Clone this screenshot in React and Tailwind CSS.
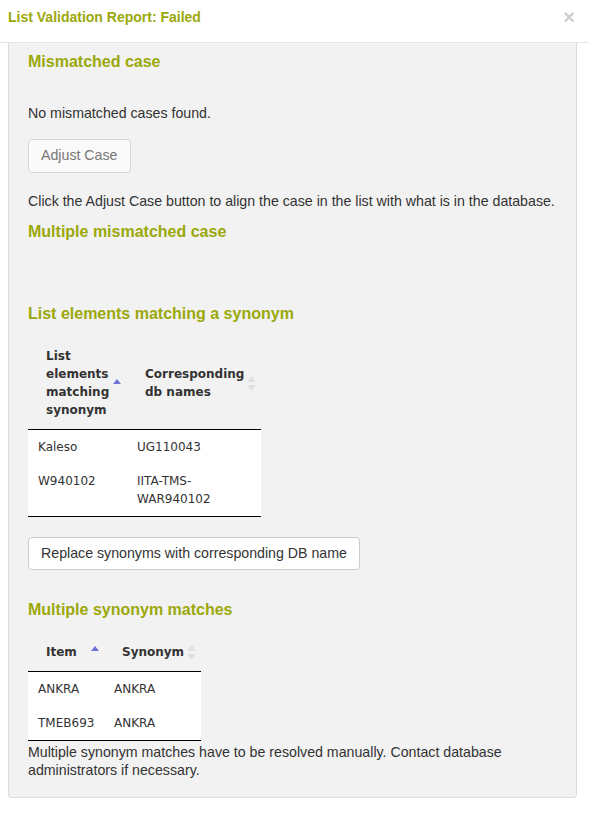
import React from "react";

function SortAsc() {
  return (
    <svg width="8" height="6" viewBox="0 0 8 6" className="absolute right-[6px] top-[42px]">
      <polygon points="4,0 8,5 0,5" fill="#6f73d9" />
    </svg>
  );
}

function SortBoth({ className }) {
  return (
    <svg width="9" height="15" viewBox="0 0 9 15" className={className}>
      <polygon points="4.5,0 9,6 0,6" fill="#e0e0e0" />
      <polygon points="0,9 9,9 4.5,15" fill="#e0e0e0" />
    </svg>
  );
}

export default function App() {
  const heading = "text-[16px] leading-[20px] font-bold text-[#9ba80a]";
  const verdana = { fontFamily: '"DejaVu Sans", Verdana, sans-serif' };
  return (
    <div className="w-[589px] h-[828px] bg-white text-[#333] text-[14.2px]" style={{ fontFamily: '"Liberation Sans", Arial, sans-serif' }}>
      <div className="h-[43px] border-b border-[#e5e5e5] flex items-center justify-between pl-[8px] pr-[14px]">
        <div className="text-[14px] font-bold text-[#9ba80a] leading-[20px] -mt-[8px]">List Validation Report: Failed</div>
        <div className="text-[20px] font-bold text-[#cfcfcf] leading-[20px] -mt-[8px]">×</div>
      </div>
      <div className="mx-[8px] w-[569px] bg-[#f2f2f2] border border-t-0 border-[#dcdcdc] rounded-b-[4px] pl-[19px] pr-[12px] pt-[9px] pb-[18px]">
        <div className={heading}>Mismatched case</div>
        <div className="mt-[32px] leading-[18px]">No mismatched cases found.</div>
        <button className="mt-[17px] h-[34px] px-[12px] border border-[#d6d6d6] rounded-[4px] bg-[#fafafa] text-[#777] text-[14.2px]">Adjust Case</button>
        <div className="mt-[19px] leading-[18px]">Click the Adjust Case button to align the case in the list with what is in the database.</div>
        <div className={heading + " mt-[12px]"}>Multiple mismatched case</div>
        <div className={heading + " mt-[62px]"}>List elements matching a synonym</div>

        <table className="mt-[13px] table-fixed border-collapse text-[12px] w-[233px]" style={verdana}>
          <thead>
            <tr className="border-b border-black">
              <th className="relative w-[99px] pl-[18px] pr-[18px] py-[10px] text-left align-middle font-bold leading-[18px] h-[92px]">
                List elements matching synonym
                <SortAsc />
              </th>
              <th className="relative w-[134px] pl-[18px] pr-[14px] py-[10px] text-left align-middle font-bold leading-[18px]">
                Corresponding db names
                <SortBoth className="absolute right-[5px] top-[39px]" />
              </th>
            </tr>
          </thead>
          <tbody className="bg-white">
            <tr>
              <td className="px-[10px] py-[8px] leading-[18px] align-top">Kaleso</td>
              <td className="px-[10px] py-[8px] leading-[18px] align-top">UG110043</td>
            </tr>
            <tr className="border-b border-black">
              <td className="px-[10px] py-[8px] leading-[18px] align-top">W940102</td>
              <td className="px-[10px] py-[8px] leading-[18px] align-top">IITA-TMS-<br />WAR940102</td>
            </tr>
          </tbody>
        </table>

        <button className="mt-[20px] h-[33px] px-[12px] border border-[#cccccc] rounded-[4px] bg-white text-[#333] text-[14.2px]">Replace synonyms with corresponding DB name</button>

        <div className={heading + " mt-[30px]"}>Multiple synonym matches</div>

        <table className="mt-[13px] table-fixed border-collapse text-[12px] w-[173px]" style={verdana}>
          <thead>
            <tr className="border-b border-black">
              <th className="relative w-[76px] pl-[18px] pr-[10px] py-[10px] text-left font-bold leading-[18px] whitespace-nowrap h-[38px]">
                Item
                <svg width="8" height="6" viewBox="0 0 8 6" className="absolute left-[63px] top-[13px]">
                  <polygon points="4,0 8,5 0,5" fill="#6f73d9" />
                </svg>
              </th>
              <th className="relative w-[97px] pl-[18px] pr-[10px] py-[10px] text-left font-bold leading-[18px] whitespace-nowrap">
                Synonym
                <SortBoth className="absolute right-[5px] top-[12px]" />
              </th>
            </tr>
          </thead>
          <tbody className="bg-white">
            <tr>
              <td className="px-[10px] py-[8px] leading-[18px]">ANKRA</td>
              <td className="px-[10px] py-[8px] leading-[18px]">ANKRA</td>
            </tr>
            <tr className="border-b border-black">
              <td className="px-[10px] py-[8px] leading-[18px]">TMEB693</td>
              <td className="px-[10px] py-[8px] leading-[18px]">ANKRA</td>
            </tr>
          </tbody>
        </table>

        <div className="mt-[2px] leading-[18px]">Multiple synonym matches have to be resolved manually. Contact database administrators if necessary.</div>
      </div>
    </div>
  );
}
